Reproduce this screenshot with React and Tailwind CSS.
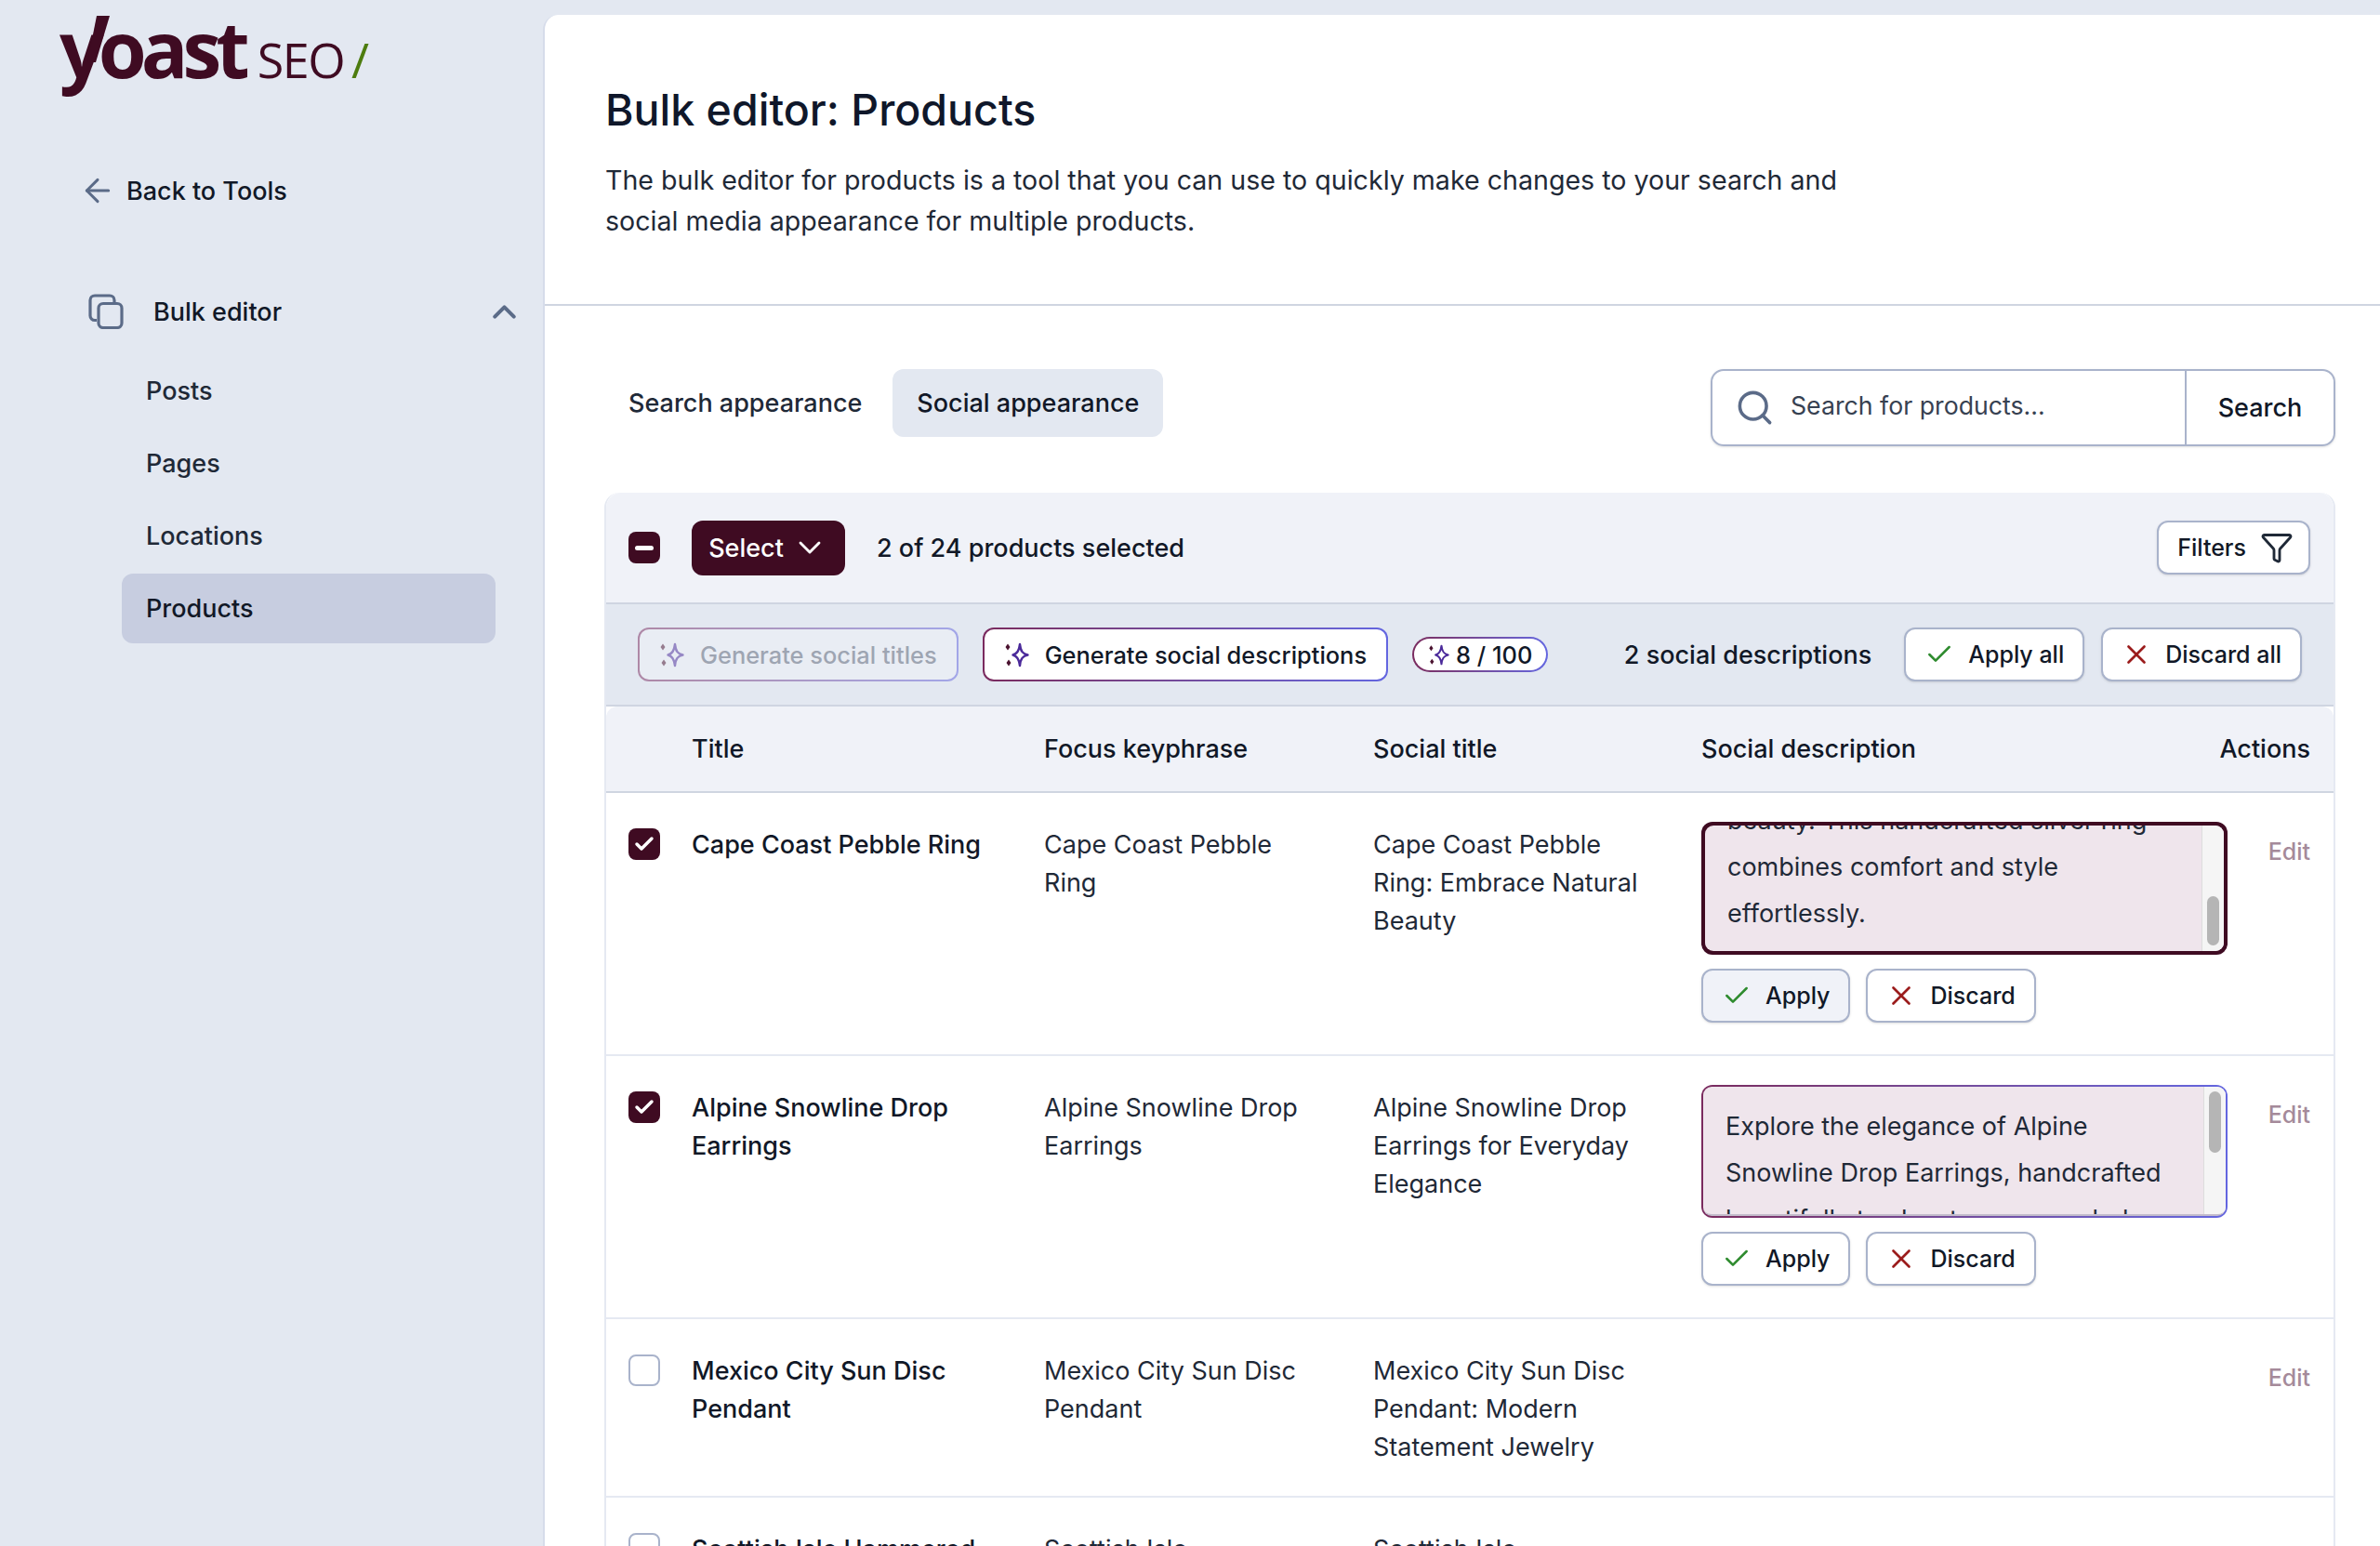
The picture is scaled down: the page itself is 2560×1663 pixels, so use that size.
import React from "react";
import { ChevronUp, ChevronDown, ArrowLeft, Search, Funnel, Check, X } from "lucide-react";

function Sparkle({ className }) {
  return (
    <svg viewBox="0 0 27 27" fill="none" className={className}>
      <path d="M17 2 C17.8 9.5 20 12.4 25.5 13.5 C20 14.6 17.8 17.5 17 25 C16.2 17.5 14 14.6 9.5 13.5 C14 12.4 16.2 9.5 17 2Z" stroke="#4b2a9a" strokeWidth="2.4" strokeLinejoin="round" />
      <path d="M4 1.5 L6.5 5 L4 8.5 L1.5 5Z M5 18.5 L7.5 22 L5 25.5 L2.5 22Z" fill="#4b1330" />
    </svg>
  );
}

function CopyIcon() {
  return (
    <svg viewBox="0 0 38 38" fill="none" className="w-[38px] h-[38px] shrink-0" stroke="#5b6b88" strokeWidth="3.2" strokeLinejoin="round">
      <path d="M9 28.5 H7 a5 5 0 0 1 -5 -5 V7 a5 5 0 0 1 5 -5 H23 a5 5 0 0 1 5 5 v2.5" />
      <rect x="11" y="10.5" width="25" height="26" rx="5" />
    </svg>
  );
}

function GradBtn({ children, disabled }) {
  return (
    <div className={`rounded-[12px] p-[2px] bg-gradient-to-r from-[#7a2a5e] to-[#6366e0] ${disabled ? "opacity-50" : ""}`}>
      <div className={`h-[54px] flex items-center gap-[17px] px-[21px] rounded-[10px] ${disabled ? "bg-[#f0f2f8] text-[#5b6475]" : "bg-white text-[#111827]"}`}>
        <Sparkle className="w-[27px] h-[27px]" />
        <span>{children}</span>
      </div>
    </div>
  );
}

function ActBtn({ kind, children, active }) {
  const apply = kind === "apply";
  return (
    <button className={`h-[58px] flex items-center rounded-[12px] border-2 border-[#a9b3cb] font-medium text-[25px] text-[#111827] shadow-sm ${apply ? "gap-[15px] pl-[20px] pr-[20px]" : "gap-[14px] pl-[19px] pr-[20px]"} ${active ? "bg-[#f0f2f8]" : "bg-white"}`}>
      {apply ? <Check className="w-[32px] h-[32px] text-[#2e8b2e]" strokeWidth={1.9} /> : <X className="w-[34px] h-[34px] text-[#9b1c1c]" strokeWidth={1.9} />}
      {children}
    </button>
  );
}

function Box({ state }) {
  if (state === "checked")
    return (
      <div className="w-[34px] h-[34px] rounded-[8px] bg-[#3f0b22] flex items-center justify-center">
        <Check className="w-[24px] h-[24px] text-white" strokeWidth={3.5} />
      </div>
    );
  return <div className="w-[34px] h-[34px] rounded-[8px] bg-white border-2 border-[#a9b3cb]" />;
}

function Row({ checked, title, focus, social, children, h }) {
  return (
    <div className={`grid grid-cols-[92px_379px_354px_353px_1fr] border-b-2 border-[#e5e9f2] ${h}`}>
      <div className="pl-[24px] pt-[38px]">
        <Box state={checked ? "checked" : "none"} />
      </div>
      <div className="pt-[35px] pr-[40px] font-medium text-[#111827]">{title}</div>
      <div className="pt-[35px] pr-[64px] text-[#1f2937]">{focus}</div>
      <div className="pt-[35px] pr-[60px] text-[#1f2937]">{social}</div>
      <div className="pt-[31px] pr-[25px] flex justify-between">
        <div className="w-[566px]">{children}</div>
        <span className="text-[#a58a9a] text-[25px] font-medium pt-[12px] leading-[40px]">Edit</span>
      </div>
    </div>
  );
}

function Area({ first, lines, topAlign, thumb }) {
  return (
    <div>
      <div className={`relative h-[143px] rounded-[12px] overflow-hidden ${first ? "bg-[#3f0b22] p-[4px]" : "bg-gradient-to-r from-[#7a2a5e] to-[#6366e0] p-[2px]"}`}>
        <div className={`relative h-full bg-[#efe5ec] rounded-[9px] overflow-hidden flex flex-col pl-[24px] pr-[40px] leading-[50px] text-[#1f2937] ${topAlign ? "justify-start pt-[18px] border-b-2 border-[#c3bccb]" : "justify-end pb-[15px]"}`}>
          {lines.map((l) => (
            <div key={l} className="whitespace-nowrap shrink-0">{l}</div>
          ))}
          <div className="absolute right-0 top-0 bottom-0 w-[24px] bg-[#f5f5f5] border-l border-[#dddddd]">
            <div className={`absolute left-[5px] w-[13px] rounded-full bg-[#b5b5b5] ${thumb}`} />
          </div>
        </div>
      </div>
      <div className="flex gap-[17px] mt-[15px]">
        <ActBtn kind="apply" active={first}>Apply</ActBtn>
        <ActBtn kind="discard">Discard</ActBtn>
      </div>
    </div>
  );
}

export default function App() {
  return (
    <div className="h-[1663px] w-[2560px] overflow-hidden bg-[#e3e8f1] flex font-['Inter',sans-serif] text-[27px] leading-[41px] text-[#111827]">
      <aside className="w-[584px] shrink-0 pl-[64px]">
        <div className="relative h-[120px] pt-[2px] flex items-baseline font-['Open_Sans',sans-serif] text-[#3f0b22]">
          <span className="font-bold text-[84px] leading-[100px] tracking-[-6px]">yoast</span>
          <span className="text-[52px] leading-[100px] ml-[14px] font-normal tracking-[-1.5px]">SEO</span>
          <span className="text-[52px] leading-[100px] ml-[8px] text-[#4d7c0f]">/</span>
          <svg viewBox="0 0 30 50" className="absolute left-[30px] top-[17px] w-[30px] h-[50px]" fill="#3f0b22">
            <path d="M10 0 H24 L9 50 H0Z" />
          </svg>
        </div>
        <div className="flex items-center gap-[11px] pl-[21px] mt-[65px] h-[40px] font-medium">
          <ArrowLeft className="w-[40px] h-[40px] text-[#5b6b88]" strokeWidth={1.8} />
          Back to Tools
        </div>
        <div className="flex items-center mt-[85px] pl-[31px] pr-[21px] h-[50px] font-medium">
          <CopyIcon />
          <span className="flex-1 ml-[32px]">Bulk editor</span>
          <ChevronUp className="w-[41px] h-[41px] text-[#5b6b88]" strokeWidth={2.4} />
        </div>
        <nav className="mt-[23px] ml-[67px] mr-[51px] flex flex-col gap-[3px] font-medium text-[#1f2937]">
          <div className="h-[75px] pl-[26px] flex items-center">Posts</div>
          <div className="h-[75px] pl-[26px] flex items-center">Pages</div>
          <div className="h-[75px] pl-[26px] flex items-center">Locations</div>
          <div className="h-[75px] pl-[26px] flex items-center bg-[#c7cde0] rounded-[12px] text-[#111827]">Products</div>
        </nav>
      </aside>
      <main className="flex-1 mt-[16px] bg-white rounded-tl-[16px] border-l-2 border-[#d6dcea]">
        <header className="h-[313px] pl-[65px] border-b-2 border-[#cfd5e1]">
          <h1 className="pt-[72px] text-[46.5px] font-medium leading-[60px] text-[#0f172a]">Bulk editor: Products</h1>
          <p className="mt-[24px] w-[1400px] text-[28.6px] leading-[44px] text-[#1f2937]">
            The bulk editor for products is a tool that you can use to quickly make changes to your search and social media appearance for multiple products.
          </p>
        </header>
        <div className="pl-[64px] pr-[48px]">
          <div className="flex items-start justify-between mt-[68px]">
            <div className="flex gap-[33px] font-medium">
              <div className="h-[73px] pl-[26px] flex items-center text-[#1f2937]">Search appearance</div>
              <div className="h-[73px] px-[26px] flex items-center bg-[#e3e8f1] rounded-[12px]">Social appearance</div>
            </div>
            <div className="w-[672px] h-[83px] flex rounded-[14px] border-2 border-[#a9b3cb] shadow-sm">
              <div className="flex-1 flex items-center pl-[24px] text-[26.7px] text-[#374151] pb-[4px]">
                <Search className="w-[43px] h-[43px] text-[#5b6b88] mr-[17px] mt-[4px]" strokeWidth={2} />
                Search for products...
              </div>
              <div className="w-[160px] border-l-2 border-[#a9b3cb] flex items-center justify-center font-medium">Search</div>
            </div>
          </div>
          <div className="mt-[50px] rounded-t-[16px] border-x-2 border-[#e5e9f2] bg-white">
            <div className="h-[120px] bg-[#f0f2f8] rounded-t-[16px] border-b-2 border-[#cfd5e1] flex items-center pl-[24px] pr-[25px]">
              <div className="w-[34px] h-[34px] rounded-[8px] bg-[#3f0b22] flex items-center justify-center">
                <div className="w-[20px] h-[5px] bg-white rounded-full" />
              </div>
              <button className="ml-[34px] h-[59px] w-[165px] rounded-[12px] bg-[#3f0b22] text-white font-medium flex items-center justify-center gap-[8px]">
                Select <ChevronDown className="w-[40px] h-[40px]" strokeWidth={1.7} />
              </button>
              <span className="ml-[34px] font-medium flex-1">2 of 24 products selected</span>
              <button className="h-[58px] pl-[20px] pr-[16px] bg-white border-2 border-[#a9b3cb] rounded-[12px] font-medium text-[25px] flex items-center gap-[15px] shadow-sm">
                Filters <Funnel className="w-[36px] h-[36px] text-[#1f2937]" strokeWidth={1.9} />
              </button>
            </div>
            <div className="h-[110px] bg-[#e3e8f1] border-b-2 border-[#cfd5e1] flex items-center pl-[34px] pr-[34px] text-[25.4px] font-medium">
              <GradBtn disabled>Generate social titles</GradBtn>
              <div className="ml-[26px]"><GradBtn>Generate social descriptions</GradBtn></div>
              <div className="ml-[26px] rounded-full p-[2px] bg-gradient-to-r from-[#7a2a5e] to-[#6366e0]">
                <div className="h-[34px] bg-white rounded-full flex items-center gap-[7px] px-[15px]">
                  <Sparkle className="w-[23px] h-[23px]" />8 / 100
                </div>
              </div>
              <span className="ml-auto text-[27px]">2 social descriptions</span>
              <div className="ml-[35px]"><ActBtn kind="apply">Apply all</ActBtn></div>
              <div className="ml-[18px]"><ActBtn kind="discard">Discard all</ActBtn></div>
            </div>
            <div className="h-[93px] bg-[#f0f2f8] rounded-t-[12px] border-b-2 border-[#cfd5e1] grid grid-cols-[92px_379px_354px_353px_1fr] items-center font-medium">
              <span />
              <span>Title</span>
              <span>Focus keyphrase</span>
              <span>Social title</span>
              <span className="flex justify-between pr-[25px]">Social description <span>Actions</span></span>
            </div>
            <Row h="h-[283px]" checked title="Cape Coast Pebble Ring" focus="Cape Coast Pebble Ring" social="Cape Coast Pebble Ring: Embrace Natural Beauty">
              <Area first lines={["beauty. This handcrafted silver ring", "combines comfort and style", "effortlessly."]} thumb="bottom-[6px] h-[53px]" />
            </Row>
            <Row h="h-[283px]" checked title="Alpine Snowline Drop Earrings" focus="Alpine Snowline Drop Earrings" social="Alpine Snowline Drop Earrings for Everyday Elegance">
              <Area topAlign lines={["Explore the elegance of Alpine", "Snowline Drop Earrings, handcrafted", "beautifully to elevate your wardrobe"]} thumb="top-[5px] h-[66px]" />
            </Row>
            <Row h="h-[192px]" title="Mexico City Sun Disc Pendant" focus="Mexico City Sun Disc Pendant" social="Mexico City Sun Disc Pendant: Modern Statement Jewelry" />
            <Row h="h-[200px]" title="Scottish Isle Hammered Band" focus="Scottish Isle Hammered Band" social="Scottish Isle Hammered Band" />
          </div>
        </div>
      </main>
    </div>
  );
}
